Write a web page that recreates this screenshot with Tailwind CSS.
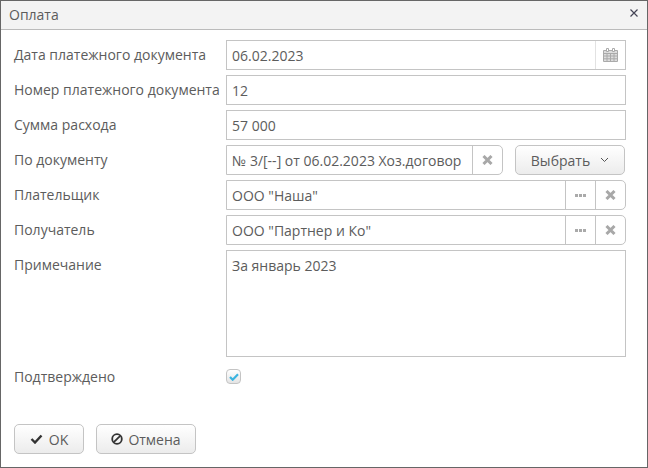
<!DOCTYPE html>
<html lang="en">
<head>
  <meta charset="UTF-8" />
  <title>Оплата</title>
  <script src="https://cdn.jsdelivr.net/npm/@tailwindcss/browser@4"></script>
</head>
<body class="bg-white">
  <!-- Dialog window -->
  <div class="w-[648px] h-[468px] border border-[#666] flex flex-col font-['Open_Sans',sans-serif] text-[14px] text-[#5c5c5c] overflow-hidden">

    <!-- Title bar -->
    <div class="h-[29px] shrink-0 bg-[#f3f3f3] border-b border-[#bbb] flex items-center justify-between pl-[8px] pr-[9px]">
      <span class="text-[14px] leading-none">Оплата</span>
      <svg class="mb-[4px]" width="8" height="8" viewBox="0 0 8 8" fill="none" stroke="#445" stroke-width="1.2"><path d="M0.5 0.5l7 7M7.5 0.5l-7 7"/></svg>
    </div>

    <!-- Form -->
    <div class="flex-1 flex flex-col gap-[5px] pt-[10px] pl-[13px] pr-[21px]">

      <div class="flex h-[30px]">
        <label class="w-[212px] pt-[4px]">Дата платежного документа</label>
        <div class="flex-1 flex border border-[#c4c4c4]">
          <div class="flex-1 px-[5px] flex items-center">06.02.2023</div>
          <div class="w-[30px] border-l border-[#e2e2e2] flex items-center justify-center">
            <svg width="15" height="14" viewBox="0 0 15 14" fill="none"><path d="M0.5 2.5h14v11h-14z" fill="#ddd" stroke="#aaa"/><path d="M0.5 5.5h14M0.5 8h14M0.5 10.8h14M4 5v8M7.5 5v8M11 5v8" stroke="#aaa"/><path d="M3.5 0.5h2v3h-2zM9.5 0.5h2v3h-2z" fill="#fff" stroke="#aaa"/></svg>
          </div>
        </div>
      </div>

      <div class="flex h-[30px]">
        <label class="w-[212px] pt-[4px]">Номер платежного документа</label>
        <div class="flex-1 border border-[#c4c4c4] px-[5px] flex items-center">12</div>
      </div>

      <div class="flex h-[30px]">
        <label class="w-[212px] pt-[4px]">Сумма расхода</label>
        <div class="flex-1 border border-[#c4c4c4] px-[5px] flex items-center">57 000</div>
      </div>

      <div class="flex h-[30px]">
        <label class="w-[212px] pt-[4px]">По документу</label>
        <div class="w-[277px] flex border border-[#c4c4c4] rounded-r-[5px]">
          <div class="flex-1 px-[5px] flex items-center whitespace-nowrap overflow-hidden">№ 3/[--] от 06.02.2023 Хоз.договор</div>
          <div class="w-[30px] border-l border-[#c4c4c4] flex items-center justify-center">
            <svg width="11" height="10" viewBox="0 0 11 10" fill="none" stroke="#a8a8a8" stroke-width="3"><path d="M1.5 1l8 8M9.5 1l-8 8"/></svg>
          </div>
        </div>
        <button class="ml-[12px] w-[110px] border border-[#c4c4c4] rounded-[5px] bg-gradient-to-b from-white to-[#ececec] flex items-center justify-center gap-[10px]">
          <span>Выбрать</span>
          <svg width="9" height="6" viewBox="0 0 9 6" fill="none" stroke="#555"><path d="M1 1l3.5 3.5L8 1"/></svg>
        </button>
      </div>

      <div class="flex h-[30px]">
        <label class="w-[212px] pt-[4px]">Плательщик</label>
        <div class="flex-1 flex border border-[#c4c4c4] rounded-r-[5px]">
          <div class="flex-1 px-[5px] flex items-center">ООО "Наша"</div>
          <div class="w-[30px] border-l border-[#c4c4c4] flex items-center justify-center">
            <svg width="11" height="3" viewBox="0 0 11 3" fill="#aaa"><path d="M0 0h3v3H0zM4 0h3v3H4zM8 0h3v3H8z"/></svg>
          </div>
          <div class="w-[30px] border-l border-[#c4c4c4] flex items-center justify-center">
            <svg width="11" height="10" viewBox="0 0 11 10" fill="none" stroke="#a8a8a8" stroke-width="3"><path d="M1.5 1l8 8M9.5 1l-8 8"/></svg>
          </div>
        </div>
      </div>

      <div class="flex h-[30px]">
        <label class="w-[212px] pt-[4px]">Получатель</label>
        <div class="flex-1 flex border border-[#c4c4c4] rounded-r-[5px]">
          <div class="flex-1 px-[5px] flex items-center">ООО "Партнер и Ко"</div>
          <div class="w-[30px] border-l border-[#c4c4c4] flex items-center justify-center">
            <svg width="11" height="3" viewBox="0 0 11 3" fill="#aaa"><path d="M0 0h3v3H0zM4 0h3v3H4zM8 0h3v3H8z"/></svg>
          </div>
          <div class="w-[30px] border-l border-[#c4c4c4] flex items-center justify-center">
            <svg width="11" height="10" viewBox="0 0 11 10" fill="none" stroke="#a8a8a8" stroke-width="3"><path d="M1.5 1l8 8M9.5 1l-8 8"/></svg>
          </div>
        </div>
      </div>

      <div class="flex h-[107px]">
        <label class="w-[212px] pt-[4px]">Примечание</label>
        <div class="flex-1 border border-[#c4c4c4] px-[5px] pt-[4px]">За январь 2023</div>
      </div>

      <div class="flex h-[30px] mt-[3px]">
        <label class="w-[212px] pt-[1px]">Подтверждено</label>
        <div class="pt-[4px]">
          <div class="w-[15px] h-[15px] border border-[#c4c4c4] rounded-[4px] bg-gradient-to-b from-white to-[#e4e4e4] flex items-center justify-center">
            <svg width="10" height="8" viewBox="0 0 10 8" fill="none" stroke="#3bb4e0" stroke-width="2.2"><path d="M1 4l2.7 2.7L9 1.3"/></svg>
          </div>
        </div>
      </div>
    </div>

    <!-- Footer buttons -->
    <div class="flex gap-[12px] pl-[13px] pb-[13px]">
      <button class="w-[70px] h-[30px] border border-[#c4c4c4] rounded-[5px] bg-gradient-to-b from-white to-[#ececec] flex items-center justify-center gap-[6px]">
        <svg width="13" height="10" viewBox="0 0 13 10" fill="none" stroke="#333" stroke-width="2.4"><path d="M1.5 5l3.5 3.5L11.5 1.5"/></svg>
        <span>OK</span>
      </button>
      <button class="w-[100px] h-[30px] border border-[#c4c4c4] rounded-[5px] bg-gradient-to-b from-white to-[#ececec] flex items-center justify-center gap-[5px]">
        <svg width="12" height="12" viewBox="0 0 12 12" fill="none" stroke="#333" stroke-width="1.8"><circle cx="6" cy="6" r="4.8"/><path d="M2.8 9.2L9.2 2.8"/></svg>
        <span>Отмена</span>
      </button>
    </div>
  </div>
</body>
</html>
